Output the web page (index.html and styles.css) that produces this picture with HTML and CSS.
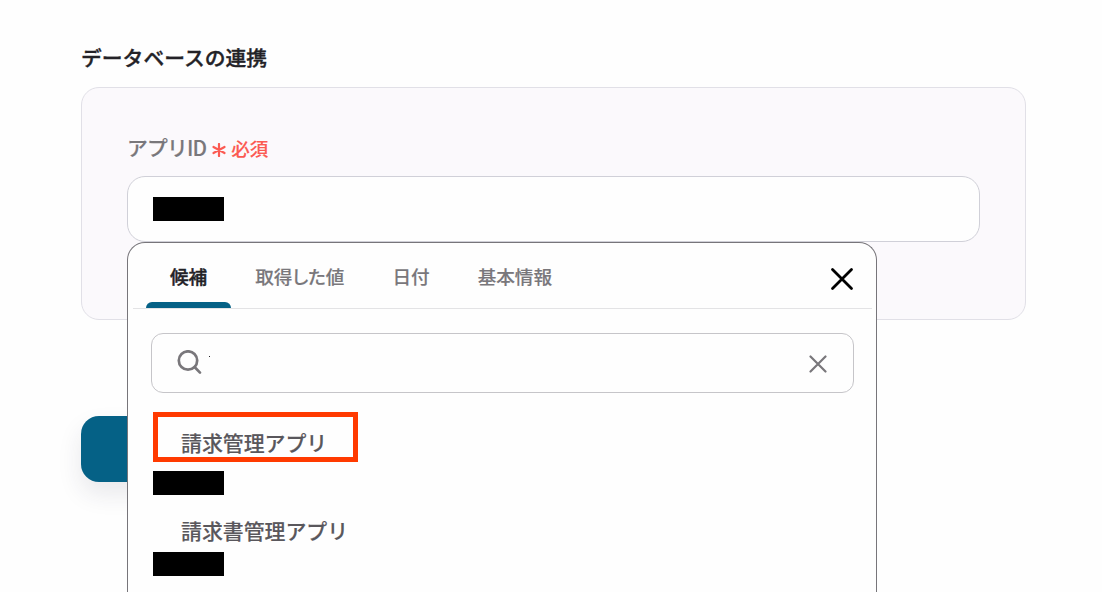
FILE: index.html
```html
<!DOCTYPE html>
<html lang="ja">
<head>
    <meta charset="UTF-8">
    <meta name="viewport" content="width=device-width, initial-scale=1.0">
    <title>データベースの連携</title>
    <link rel="stylesheet" href="styles.css">
</head>
<body>
    <main class="container">
        <h1 class="title">データベースの連携</h1>

        <section class="panel">
            <div class="label">
                <span class="label-text">アプリID</span>
                <span class="required">
                    <svg class="required-icon" viewBox="0 0 14 14" fill="none" stroke="currentColor" stroke-width="2.2" stroke-linecap="round">
                        <path d="M7 1V13M1.5 4L12.5 10M12.5 4L1.5 10"/>
                    </svg>
                    必須
                </span>
            </div>
            <div class="field">
                <div class="input"><span class="mask"></span></div>

                <div class="dropdown">
                    <div class="dropdown-header">
                        <div class="tabs">
                            <button class="tab active">候補</button>
                            <button class="tab">取得した値</button>
                            <button class="tab">日付</button>
                            <button class="tab">基本情報</button>
                        </div>
                        <svg class="close-icon" viewBox="0 0 24 24" fill="none" stroke="currentColor" stroke-width="2.8" stroke-linecap="round">
                            <path d="M2.5 2.5L21.5 21.5M21.5 2.5L2.5 21.5"/>
                        </svg>
                    </div>

                    <div class="search">
                        <svg class="search-icon" viewBox="0 0 26 26" fill="none" stroke="currentColor" stroke-width="2.7" stroke-linecap="round">
                            <circle cx="11" cy="10.5" r="9.2"/>
                            <path d="M17.8 17.3L23 22.6"/>
                        </svg>
                        <span class="search-mark"></span>
                        <svg class="clear-icon" viewBox="0 0 18 18" fill="none" stroke="currentColor" stroke-width="2.2" stroke-linecap="round">
                            <path d="M1.5 1.5L16.5 16.5M16.5 1.5L1.5 16.5"/>
                        </svg>
                    </div>

                    <ul class="list">
                        <li class="item">
                            <div class="item-name highlight">請求管理アプリ</div>
                            <span class="mask"></span>
                        </li>
                        <li class="item">
                            <div class="item-name">請求書管理アプリ</div>
                            <span class="mask"></span>
                        </li>
                    </ul>
                </div>
            </div>
        </section>

        <button class="submit-btn"></button>
    </main>
</body>
</html>
```

FILE: styles.css
```css
* {
    margin: 0;
    padding: 0;
    box-sizing: border-box;
}

body {
    font-family: 'Noto Sans CJK JP', sans-serif;
    background: #fefefe;
    color: #232227;
}

.container {
    height: 592px;
    padding: 42px 76px 0 81px;
}

.title {
    font-size: 20.8px;
    font-weight: 500;
    line-height: 30px;
    margin-bottom: 15px;
    -webkit-text-stroke: 0.35px;
}

.panel {
    height: 233px;
    padding: 44px 45px 0;
    background: #fbf9fc;
    border: 1px solid #e1e0e7;
    border-radius: 18px;
}

.label {
    display: flex;
    align-items: center;
    gap: 6px;
    height: 30px;
    margin-bottom: 14px;
    font-size: 20.8px;
    font-weight: 500;
    line-height: 30px;
    color: #79777b;
    -webkit-text-stroke: 0.15px;
}

.label-text {
    letter-spacing: -0.8px;
}

.required {
    display: flex;
    align-items: center;
    gap: 5px;
    padding-top: 2px;
    font-size: 18.5px;
    color: #fb5a52;
}

.required-icon {
    width: 14px;
    height: 14px;
    margin-top: 4px;
}

.field {
    position: relative;
}

.input {
    display: flex;
    align-items: center;
    height: 66px;
    padding-left: 25px;
    background: #fefefe;
    border: 1px solid #d0d0d8;
    border-radius: 18px;
}

.mask {
    display: block;
    width: 71px;
    height: 24px;
    background: #000;
}

.dropdown {
    position: absolute;
    top: 66px;
    left: 0;
    width: 750px;
    height: 350px;
    background: #fefefe;
    border: 1px solid #77757a;
    border-bottom: none;
    border-radius: 18px 18px 0 0;
}

.dropdown-header {
    display: flex;
    justify-content: space-between;
    height: 66px;
    margin: 0 4px 0 5px;
    padding: 0 18px 0 13px;
    border-bottom: 1px solid #e3e3e5;
}

.tabs {
    display: flex;
}

.tab {
    display: flex;
    flex-direction: column;
    justify-content: space-between;
    height: 65px;
    padding: 19px 24px 0;
    font-family: inherit;
    font-size: 18.6px;
    font-weight: 500;
    line-height: 28px;
    font-feature-settings: 'palt';
    color: #79777b;
    background: none;
    border: none;
    -webkit-text-stroke: 0.15px;
}

.tab.active {
    color: #232227;
    -webkit-text-stroke: 0.4px;
}

.tab.active::after {
    content: '';
    width: 85px;
    height: 6px;
    margin: 0 -24px;
    background: #056186;
    border-radius: 6px 6px 0 0;
}

.close-icon {
    width: 24px;
    height: 24px;
    margin-top: 24px;
    color: #000;
}

.search {
    display: flex;
    align-items: center;
    width: 703px;
    height: 60px;
    margin: 24px 0 19px 23px;
    padding: 0 26px 0 25px;
    border: 1px solid #c6c5c9;
    border-radius: 12px;
    color: #79777b;
}

.search-icon {
    width: 26px;
    height: 26px;
}

.search-mark {
    width: 1px;
    height: 1px;
    margin: 0 auto 13px 6px;
    background: #232227;
}

.clear-icon {
    width: 18px;
    height: 18px;
    margin-top: 2px;
}

.list {
    padding-left: 25px;
    list-style: none;
}

.item + .item {
    margin-top: 20px;
}

.item-name {
    padding-left: 28px;
    margin-bottom: 7px;
    font-size: 20.9px;
    font-weight: 500;
    line-height: 30px;
    color: #59575c;
    -webkit-text-stroke: 0.15px;
}

.item-name.highlight {
    width: 205px;
    height: 50px;
    padding: 10px 0 0 23px;
    margin-bottom: 9px;
    border: 5px solid #ff3a00;
}

.submit-btn {
    display: block;
    width: 240px;
    height: 66px;
    margin-top: 96px;
    background: #056186;
    border: none;
    border-radius: 18px;
    box-shadow: 0 12px 24px rgba(40, 40, 70, 0.1);
}
```
